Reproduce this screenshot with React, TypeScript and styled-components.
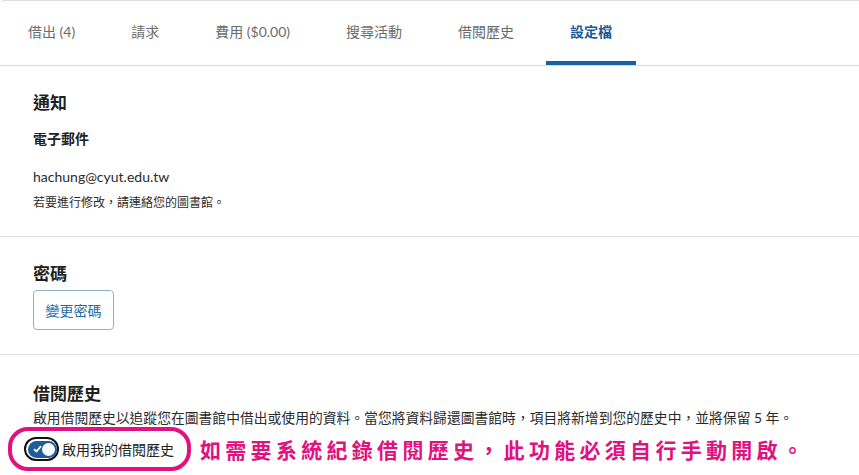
import React from 'react';
import styled, { createGlobalStyle } from 'styled-components';

const GlobalStyle = createGlobalStyle`
  html, body {
    margin: 0;
    padding: 0;
    background: #ffffff;
  }
  body {
    font-family: "Lato", "Noto Sans CJK TC", sans-serif;
    color: #222222;
  }
`;

const Page = styled.div`
  width: 859px;
  border-top: 1px solid #dcdfe2;
  border-top-left-radius: 4px;
`;

const TabBar = styled.div`
  display: flex;
  height: 64px;
  padding-left: 4px;
  border-bottom: 1px solid #d5dadd;
`;

const Tab = styled.div<{ $active?: boolean }>`
  display: flex;
  align-items: center;
  padding: 0 24px 4px;
  margin-right: 8px;
  font-size: 14px;
  color: ${p => (p.$active ? '#1a5a96' : '#6b6b6b')};
  font-weight: ${p => (p.$active ? 700 : 400)};
  box-shadow: ${p => (p.$active ? 'inset 0 -4px 0 #1662a6' : 'none')};
  white-space: nowrap;
`;

const Section = styled.section<{ $last?: boolean }>`
  padding: ${p => (p.$last ? '27px 33px 0' : '25px 33px 24px')};
  border-bottom: ${p => (p.$last ? 'none' : '1px solid #dedede')};
`;

const Heading = styled.h2`
  margin: 0;
  font-size: 17px;
  line-height: 24px;
  font-weight: 700;
  color: #1f1f1f;
`;

const SubHeading = styled.h3`
  margin: 14px 0 0;
  font-size: 14px;
  line-height: 20px;
  font-weight: 700;
  color: #222;
`;

const Email = styled.div`
  margin-top: 18px;
  font-size: 14px;
  line-height: 20px;
  color: #2b2b2b;
`;

const Note = styled.div<{ $size?: number }>`
  margin-top: ${p => (p.$size ? '3px' : '7px')};
  font-size: ${p => p.$size ?? 12}px;
  line-height: 18px;
  color: #2b2b2b;
`;

const OutlineButton = styled.button`
  margin-top: 4px;
  width: 81px;
  height: 40px;
  border: 1px solid #8fb0cc;
  border-radius: 4px;
  background: #fff;
  color: #2a6aa4;
  font-family: inherit;
  font-size: 14px;
  padding: 0;
`;

const ToggleRow = styled.div`
  position: relative;
  display: flex;
  align-items: center;
  gap: 12px;
  margin: 0 0 0 -9px;
  height: 44px;
`;

const ToggleLabel = styled.label`
  display: flex;
  align-items: center;
  gap: 3px;
  font-size: 14px;
  color: #222;
`;

const Switch = styled.span`
  display: inline-flex;
  box-sizing: border-box;
  width: 35px;
  height: 24px;
  padding: 1.5px;
  border: 2px solid #111;
  border-radius: 12px;
`;

const SwitchTrack = styled.span`
  display: flex;
  align-items: center;
  justify-content: space-between;
  flex: 1;
  padding: 0 2px 0 5px;
  border-radius: 9px;
  background: #1b5e9b;
`;

const Knob = styled.span`
  width: 13px;
  height: 13px;
  border-radius: 50%;
  background: #fff;
`;

const Highlight = styled.span`
  position: absolute;
  left: -16px;
  top: 0;
  width: 183px;
  height: 44px;
  box-sizing: border-box;
  border: 4px solid #e0127f;
  border-radius: 20px;
  pointer-events: none;
`;

const Callout = styled.div`
  margin-left: 14px;
  font-size: 21px;
  font-weight: 700;
  letter-spacing: 4.3px;
  color: #e0127f;
  white-space: nowrap;
`;

const tabs = ['借出 (4)', '請求', '費用 ($0.00)', '搜尋活動', '借閱歷史', '設定檔'];

export default function App() {
  return (
    <>
      <GlobalStyle />
      <Page>
        <TabBar>
          {tabs.map(t => (
            <Tab key={t} $active={t === '設定檔'}>{t}</Tab>
          ))}
        </TabBar>

        <Section>
          <Heading>通知</Heading>
          <SubHeading>電子郵件</SubHeading>
          <Email>hachung@cyut.edu.tw</Email>
          <Note>若要進行修改，請連絡您的圖書館。</Note>
        </Section>

        <Section>
          <Heading>密碼</Heading>
          <OutlineButton>變更密碼</OutlineButton>
        </Section>

        <Section $last>
          <Heading>借閱歷史</Heading>
          <Note $size={13.8}>
            啟用借閱歷史以追蹤您在圖書館中借出或使用的資料。當您將資料歸還圖書館時，項目將新增到您的歷史中，並將保留 5 年。
          </Note>
          <ToggleRow>
            <ToggleLabel>
              <Switch>
                <SwitchTrack>
                  <svg width="9" height="8" viewBox="0 0 9 8">
                    <path d="M1 4.2 L3.4 6.5 L8 1.2" fill="none" stroke="#fff" strokeWidth="1.8" />
                  </svg>
                  <Knob />
                </SwitchTrack>
              </Switch>
              啟用我的借閱歷史
            </ToggleLabel>
            <Highlight />
            <Callout>如需要系統紀錄借閱歷史，此功能必須自行手動開啟。</Callout>
          </ToggleRow>
        </Section>
      </Page>
    </>
  );
}
